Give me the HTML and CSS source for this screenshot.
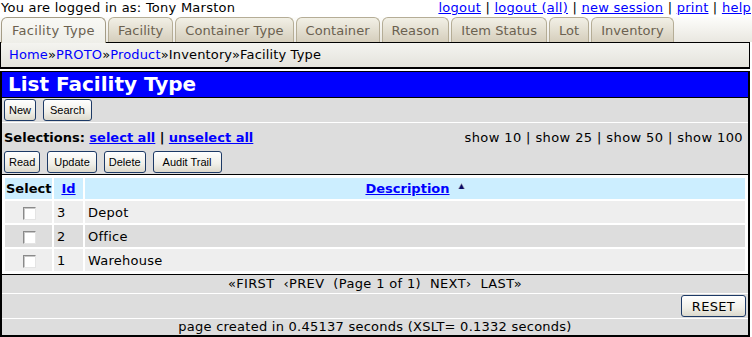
FILE: index.html
```html
<!DOCTYPE html>
<html>
<head>
<meta charset="utf-8">
<title>List Facility Type</title>
<link rel="stylesheet" href="styles.css">
</head>
<body>
<div class="topbar">
  <span class="user">You are logged in as: Tony Marston</span>
  <span class="links"><a href="#">logout</a> | <a href="#">logout (all)</a> | <a href="#">new session</a> | <a href="#">print</a> | <a href="#">help</a></span>
</div>
<div class="tabs">
  <a class="tab active" href="#">Facility Type</a>
  <a class="tab" href="#">Facility</a>
  <a class="tab" href="#">Container Type</a>
  <a class="tab" href="#">Container</a>
  <a class="tab" href="#">Reason</a>
  <a class="tab" href="#">Item Status</a>
  <a class="tab" href="#">Lot</a>
  <a class="tab" href="#">Inventory</a>
</div>
<div class="crumbs"><a href="#">Home</a>»<a href="#">PROTO</a>»<a href="#">Product</a>»Inventory»Facility Type</div>
<div class="main">
  <h1 class="title">List Facility Type</h1>
  <div class="navbar">
    <button class="btn">New</button>
    <button class="btn mid">Search</button>
  </div>
  <div class="actions">
    <div class="selrow">
      <span class="sel"><b>Selections:</b> <a href="#">select all</a> <b>|</b> <a href="#">unselect all</a></span>
      <span class="show">show 10 | show 25 | show 50 | show 100</span>
    </div>
    <div class="btnrow">
      <button class="btn">Read</button>
      <button class="btn mid">Update</button>
      <button class="btn">Delete</button>
      <button class="btn wide">Audit Trail</button>
    </div>
  </div>
  <div class="tablewrap">
    <table class="grid">
      <colgroup><col class="w-sel"><col class="w-id"><col></colgroup>
      <thead>
        <tr>
          <th class="c-sel">Select</th>
          <th class="c-id"><a href="#">Id</a></th>
          <th class="c-desc"><a href="#">Description</a><svg class="sort" width="7" height="6" viewBox="0 0 7 6"><path d="M3.5 0 L7 6 L0 6 Z" fill="#9a9aa8"/><path d="M3.5 1 L6 6 L1 6 Z" fill="#0a0a6a"/></svg></th>
        </tr>
      </thead>
      <tbody>
        <tr class="odd"><td class="c-sel"><span class="cb"></span></td><td>3</td><td>Depot</td></tr>
        <tr class="even"><td class="c-sel"><span class="cb"></span></td><td>2</td><td>Office</td></tr>
        <tr class="odd"><td class="c-sel"><span class="cb"></span></td><td>1</td><td>Warehouse</td></tr>
      </tbody>
    </table>
  </div>
  <div class="pager">«FIRST&nbsp; ‹PREV&nbsp; (Page 1 of 1)&nbsp; NEXT›&nbsp; LAST»</div>
  <div class="resetbar"><button class="btn reset">RESET</button></div>
  <div class="footer">page created in 0.45137 seconds (XSLT= 0.1332 seconds)</div>
</div>
</body>
</html>
```
FILE: styles.css
```css
* { box-sizing: border-box; }
body {
  margin: 0;
  width: 752px;
  font-family: "DejaVu Sans", Verdana, sans-serif;
  font-size: 13px;
  letter-spacing: 0.25px;
  color: #000;
  background: #fff;
}
a { color: #0000ff; }
b, th, .sel a, .title { letter-spacing: 0; }

.topbar {
  display: flex;
  justify-content: space-between;
  height: 17px;
  line-height: 15px;
  padding-left: 1px;
}
.topbar .links { padding-right: 1px; }

.tabs {
  display: flex;
  gap: 2px;
  height: 25px;
  padding-left: 1px;
  background: linear-gradient(#fdfdfb, #e9e7e0);
  position: relative;
}
.tab {
  display: flex;
  align-items: center;
  padding: 0 9px;
  height: 25px;
  color: #6b6150;
  letter-spacing: 0.05px;
  text-decoration: none;
  border: 1px solid #b5ad96;
  border-bottom: none;
  border-radius: 6px 6px 0 0;
  background: linear-gradient(#f2f0e6, #d5cebc);
}
.tab.active {
  background: linear-gradient(#f9f9f5, #eeeee8);
  border-color: #a49c86;
  height: 26px;
  padding: 0 10px 0 10px;
  letter-spacing: 0.3px;
  position: relative;
  z-index: 2;
}

.crumbs {
  height: 27px;
  width: 750px;
  border: 1px solid #000;
  border-bottom-width: 2px;
  background: linear-gradient(#f4f4f0, #e4e3dc);
  padding: 3px 0 0 8px;
  line-height: 18px;
  letter-spacing: 0.15px;
}
.crumbs a { text-decoration: none; }

.main {
  margin-top: 2px;
  width: 750px;
  border: 2px solid #000;
  border-top-width: 1px;
}
.title {
  margin: 0;
  height: 26px;
  background: #0000ff;
  color: #fff;
  font-size: 20px;
  font-weight: bold;
  line-height: 24px;
  padding-left: 6px;
  border-bottom: 1px solid #000;
}
.navbar {
  display: flex;
  gap: 7px;
  align-items: center;
  height: 25px;
  padding-left: 2px;
  background: #dddddd;
  border-bottom: 1px solid #fff;
}
.btn {
  font-family: "Liberation Sans", Arial, sans-serif;
  font-size: 11px;
  letter-spacing: 0;
  height: 22px;
  padding: 0 4px;
  color: #000;
  border: 1px solid #1d3a66;
  border-radius: 3px;
  background: linear-gradient(#ffffff, #f0efe8 60%, #dcd9cc);
}
.btn.mid { padding: 0 6px; }
.btn.wide { padding: 0 9px; }
.actions {
  background: #dddddd;
  height: 51px;
  padding: 0 2px;
}
.selrow {
  display: flex;
  justify-content: space-between;
  align-items: center;
  height: 28px;
  padding-left: 0;
}
.sel a { font-weight: bold; }
.show { padding-right: 3px; letter-spacing: 0.4px; }
.btnrow {
  display: flex;
  gap: 7px;
  align-items: center;
}

.tablewrap {
  border-top: 1px solid #000;
  border-bottom: 1px solid #000;
  padding: 1px;
  background: #fff;
}
.grid {
  width: 100%;
  table-layout: fixed;
  border-spacing: 2px;
}
.grid .w-sel { width: 47px; }
.grid .w-id { width: 29px; }
.grid th, .grid td {
  padding: 0 3px;
  text-align: left;
  font-weight: normal;
  white-space: nowrap;
}
.grid th {
  background: #cceeff;
  height: 21px;
  font-weight: bold;
  text-align: center;
  padding: 0 1px;
}
.grid td { height: 22px; }
.grid td.c-sel { text-align: center; padding-left: 4px; }
.sort { vertical-align: top; margin-left: 8px; margin-top: 2px; }
.odd td { background: #eeeeee; }
.even td { background: #dddddd; }
.cb {
  display: inline-block;
  width: 13px;
  height: 13px;
  vertical-align: middle;
  border: 1px solid;
  border-color: #8a8a8a #e4e4e4 #e4e4e4 #8a8a8a;
  background: #fff;
  box-shadow: inset 1px 1px 0 #c8c8c8;
}

.pager {
  background: #dddddd;
  height: 19px;
  line-height: 18px;
  text-align: center;
  border-bottom: 1px solid #fff;
  letter-spacing: 0.35px;
}
.resetbar {
  background: #dddddd;
  height: 25px;
  display: flex;
  justify-content: flex-end;
  align-items: center;
  padding-right: 2px;
  border-bottom: 1px solid #fff;
}
.btn.reset {
  font-family: "DejaVu Sans", Verdana, sans-serif;
  font-size: 13px;
  letter-spacing: 0.3px;
  padding: 0 10px;
}
.footer {
  background: #dddddd;
  height: 16px;
  line-height: 16px;
  text-align: center;
}
```
